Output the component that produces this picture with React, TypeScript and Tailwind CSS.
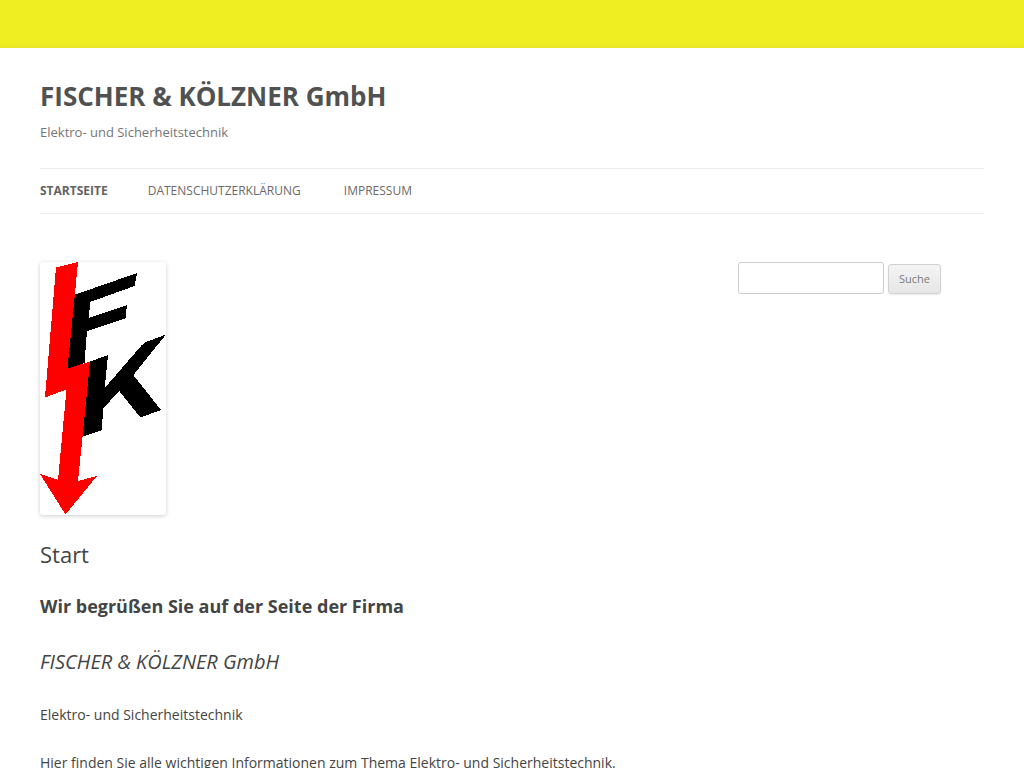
import React from "react";

const navItems = [
  { label: "Datenschutzerklärung", href: "#datenschutz" },
  { label: "Impressum", href: "#impressum" },
];

function Logo() {
  return (
    <svg
      viewBox="0 0 126 253"
      role="img"
      aria-label="FK"
      className="block h-[253px] w-[126px] rounded-[3px] shadow-[0_1px_4px_rgba(0,0,0,0.2)]"
      shapeRendering="crispEdges"
    >
      <path
        fill="#000"
        d="M34 33 97 11 94.5 24 50 40 49 56 87 43 85.5 56.5 47 69 44.5 101 27 107Z"
      />
      <path
        fill="#000"
        d="M49 100 68 93 64.7 126 101.5 83.5 106 80 126 72.5 93.3 113 121 148 100.5 155.5 79.3 129 63 146.5 62 168 42 175Z"
      />
      <path
        fill="#f00"
        d="M16 5.5 38 0 35 31 27.5 106.5 50 99.5 43 170 38 219 57 214 25.5 252.5 0 212 18 218 26.5 127.5 5 135.5Z"
      />
    </svg>
  );
}

function Header() {
  return (
    <header className="py-6">
      <h1 className="text-[26px] leading-[48px] font-bold text-[#515151]">
        <a href="#start">FISCHER &amp; KÖLZNER GmbH</a>
      </h1>
      <h2 className="text-[13px] leading-6 text-[#757575]">Elektro- und Sicherheitstechnik</h2>
      <nav className="mt-6 border-y border-[#ededed]">
        <ul className="text-xs leading-[44px] uppercase">
          <li className="mr-10 inline-block align-top">
            <a href="#start" aria-current="page" className="font-bold text-[#636363]">
              Startseite
            </a>
          </li>
          {navItems.map((item) => (
            <React.Fragment key={item.label}>
              <li className="mr-10 inline-block align-top">
                <a href={item.href} className="text-[#6a6a6a]">
                  {item.label}
                </a>
              </li>{" "}
            </React.Fragment>
          ))}
        </ul>
      </nav>
    </header>
  );
}

function SearchForm() {
  return (
    <form className="flex items-end gap-1" onSubmit={(e) => e.preventDefault()}>
      <input
        type="text"
        aria-label="Suche nach"
        className="h-8 w-[146px] rounded-[3px] border border-[#ccc] bg-white px-1.5 text-sm"
      />
      <button
        type="submit"
        className="h-[30px] rounded-[3px] border border-[#d2d2d2] bg-linear-to-b from-[#f4f4f4] to-[#e6e6e6] px-[10px] text-[11px] text-[#7c7c7c] shadow-[0_1px_2px_rgba(64,64,64,0.1)]"
      >
        Suche
      </button>
    </form>
  );
}

export default function App() {
  return (
    <div className="min-h-screen bg-[#eeee22] pt-12 font-['Open_Sans',sans-serif] text-[#444]">
      <div className="mx-auto max-w-[1040px] bg-white px-10 pb-6 shadow-[0_2px_6px_rgba(100,100,100,0.3)]">
        <Header />
        <div className="flex justify-between pt-6">
          <main className="w-[65%]">
            <article>
              <Logo />
              <h1 className="mt-[26px] text-[22px] leading-[26px]">Start</h1>
              <div className="mt-6 flex flex-col gap-6">
                <h2 className="text-lg leading-[30px] font-bold">Wir begrüßen Sie auf der Seite der Firma</h2>
                <p className="text-xl leading-[34px] italic">FISCHER &amp; KÖLZNER GmbH</p>
                <p className="text-sm leading-6">Elektro- und Sicherheitstechnik</p>
                <p className="text-sm leading-6">
                  Hier finden Sie alle wichtigen Informationen zum Thema Elektro- und Sicherheitstechnik.
                </p>
              </div>
            </article>
          </main>
          <aside className="w-[246px] shrink-0">
            <SearchForm />
          </aside>
        </div>
      </div>
    </div>
  );
}
